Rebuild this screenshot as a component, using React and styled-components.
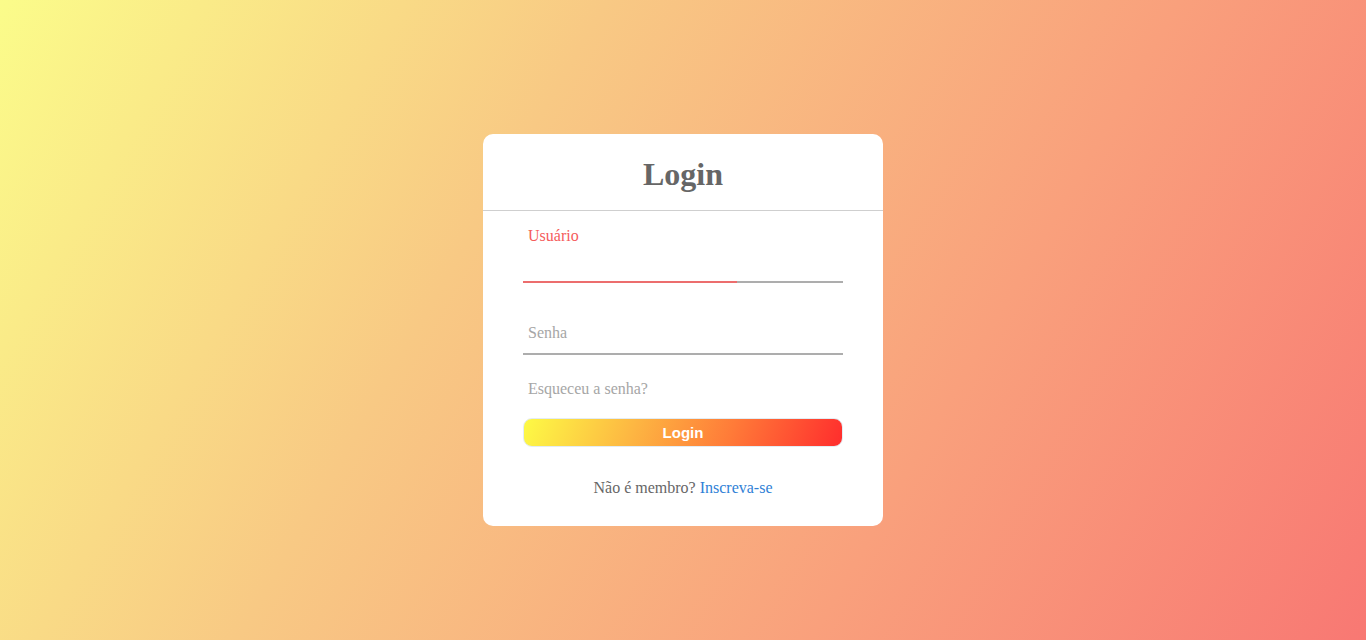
import React from 'react';
import styled, { createGlobalStyle } from 'styled-components';

export default function App() {
    return (
        <>
            <Global />
            <Page>
                <Card>
                    <Title>Login</Title>
                    <Form>
                        <Field>
                            <Input type='text' />
                            <Line progress={67} />
                            <Label active>Usuário</Label>
                        </Field>
                        <Field>
                            <Input type='password' />
                            <Line progress={0} />
                            <Label>Senha</Label>
                        </Field>
                        <Forgot>Esqueceu a senha?</Forgot>
                        <Submit type='button'>Login</Submit>
                        <Signup>
                            Não é membro? <a href='#'>Inscreva-se</a>
                        </Signup>
                    </Form>
                </Card>
            </Page>
        </>
    );
}

const Global = createGlobalStyle`
    * { box-sizing: border-box; }
    body {
        margin: 0;
        font-family: "Liberation Serif", "Times New Roman", serif;
    }
`;

const Page = styled.div`
    min-height: 640px;
    height: 100vh;
    display: flex;
    justify-content: center;
    align-items: flex-start;
    padding-top: 134px;
    background: linear-gradient(120deg, #fbfc8a 0%, #f8c984 35%, #f9a07c 68%, #f87873 100%);
`;

const Card = styled.div`
    width: 400px;
    background: #fff;
    border-radius: 10px;
`;

const Title = styled.h1`
    margin: 0;
    padding: 22px 0 18px;
    line-height: 36px;
    text-align: center;
    font-size: 32px;
    font-weight: 700;
    color: #666;
    border-bottom: 1px solid #cfcfcf;
`;

const Form = styled.form`
    display: flex;
    flex-direction: column;
    padding: 30px 40px 0;
`;

const Field = styled.div`
    position: relative;
    margin-bottom: 30px;
    border-bottom: 2px solid #adadad;
`;

const Input = styled.input`
    display: block;
    width: 100%;
    height: 40px;
    padding: 0 5px;
    border: none;
    outline: none;
    background: none;
    font-size: 16px;
`;

const Line = styled.span`
    position: absolute;
    left: 0;
    bottom: -2px;
    height: 2px;
    width: ${p => p.progress}%;
    background: #ec6d6d;
`;

const Label = styled.label`
    position: absolute;
    left: 5px;
    top: ${p => (p.active ? '-5px' : '50%')};
    transform: translateY(-50%);
    font-size: 16px;
    color: ${p => (p.active ? '#f55b5b' : '#a6a6a6')};
    pointer-events: none;
`;

const Forgot = styled.div`
    margin: -5px 0 20px 5px;
    color: #a6a6a6;
    font-size: 16px;
    line-height: 18px;
`;

const Submit = styled.button`
    display: block;
    width: 100%;
    height: 29px;
    border: 1px solid #e3ecf3;
    border-radius: 9px;
    background: linear-gradient(110deg, #fdfa45 0%, #fdb542 35%, #ff7a38 65%, #ff2d2d 100%);
    color: #fff;
    font-family: "Liberation Sans", Arial, sans-serif;
    font-size: 15px;
    font-weight: 700;
    cursor: pointer;
`;

const Signup = styled.div`
    margin: 32px 0 29px;
    text-align: center;
    font-size: 16px;
    line-height: 18px;
    color: #666;

    a {
        color: #2f7fd6;
        text-decoration: none;
    }
`;
